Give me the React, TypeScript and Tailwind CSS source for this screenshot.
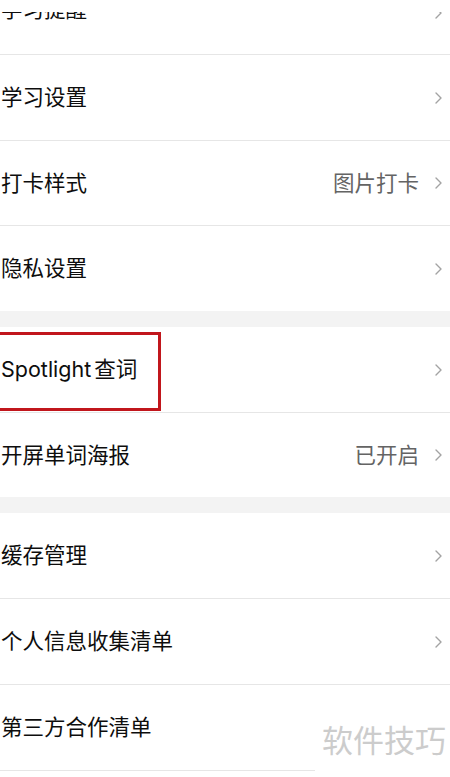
import React from "react";

type Row = { label: string; suffix?: string; value?: string; highlight?: boolean; h: string };

const groups: { band?: string; rows: Row[] }[] = [
  {
    rows: [
      { label: "学习设置", h: "h-[86px]" },
      { label: "打卡样式", value: "图片打卡", h: "h-[85px]" },
      { label: "隐私设置", h: "h-[85px]" },
    ],
  },
  {
    band: "h-[16px]",
    rows: [
      { label: "Spotlight", suffix: "查词", highlight: true, h: "h-[86px]" },
      { label: "开屏单词海报", value: "已开启", h: "h-[84px]" },
    ],
  },
  {
    band: "h-[16px]",
    rows: [
      { label: "缓存管理", h: "h-[86px]" },
      { label: "个人信息收集清单", h: "h-[86px]" },
      { label: "第三方合作清单", h: "h-[86px]" },
    ],
  },
];

function Chevron() {
  return (
    <svg width="9" height="14" viewBox="0 0 9 14" fill="none" className="shrink-0">
      <path d="M2 2l5 5-5 5" stroke="#a3a3a3" strokeWidth="1.4" strokeLinecap="round" strokeLinejoin="round" />
    </svg>
  );
}

function SettingRow({ row, border }: { row: Row; border: boolean }) {
  return (
    <div
      className={
        "relative flex items-center justify-between pl-[1px] pr-[7px] " +
        row.h +
        (border ? " border-b border-[#e6e6e6]" : "")
      }
    >
      <span className="text-[21.5px] text-[#0d0d0d]">
        {row.label}
        {row.suffix && <span className="ml-[3px]">{row.suffix}</span>}
      </span>
      <div className="flex items-center gap-[15px]">
        {row.value && <span className="text-[21.5px] text-[#646464]">{row.value}</span>}
        <Chevron />
      </div>
      {/* red highlight box from the tutorial screenshot */}
      {row.highlight && (
        <div className="absolute -left-[4px] top-[5px] h-[79px] w-[165px] border-[3px] border-[#c1161c]" />
      )}
    </div>
  );
}

export default function App() {
  return (
    <div
      className="relative h-[777px] w-[450px] overflow-hidden bg-white"
      style={{ fontFamily: 'Inter, "Noto Sans CJK SC", sans-serif' }}
    >
      {/* top row, mostly scrolled away */}
      <div className="flex h-[55px] items-start justify-between border-b border-[#e6e6e6] pl-[1px] pr-[7px] pt-[12px]">
        <div className="flex h-[8px] items-end overflow-hidden">
          <span className="text-[21.5px] leading-[21px] text-[#0d0d0d]">学习提醒</span>
        </div>
        <div className="h-[8px] overflow-hidden">
          <div className="-mt-[6px]">
            <Chevron />
          </div>
        </div>
      </div>

      {groups.map((g, gi) => (
        <div key={gi}>
          {g.band && <div className={"bg-[#f3f3f3] " + g.band} />}
          {g.rows.map((row, ri) => (
            <SettingRow
              key={row.label}
              row={row}
              border={ri < g.rows.length - 1 || gi === groups.length - 1}
            />
          ))}
        </div>
      ))}

      {/* site watermark */}
      <div className="absolute bottom-0 right-0 flex h-[64px] w-[135px] items-start justify-end bg-white pr-[4px] pt-[10px]">
        <span className="text-[31px] leading-[36px] text-[#cccccc]">软件技巧</span>
      </div>
    </div>
  );
}
